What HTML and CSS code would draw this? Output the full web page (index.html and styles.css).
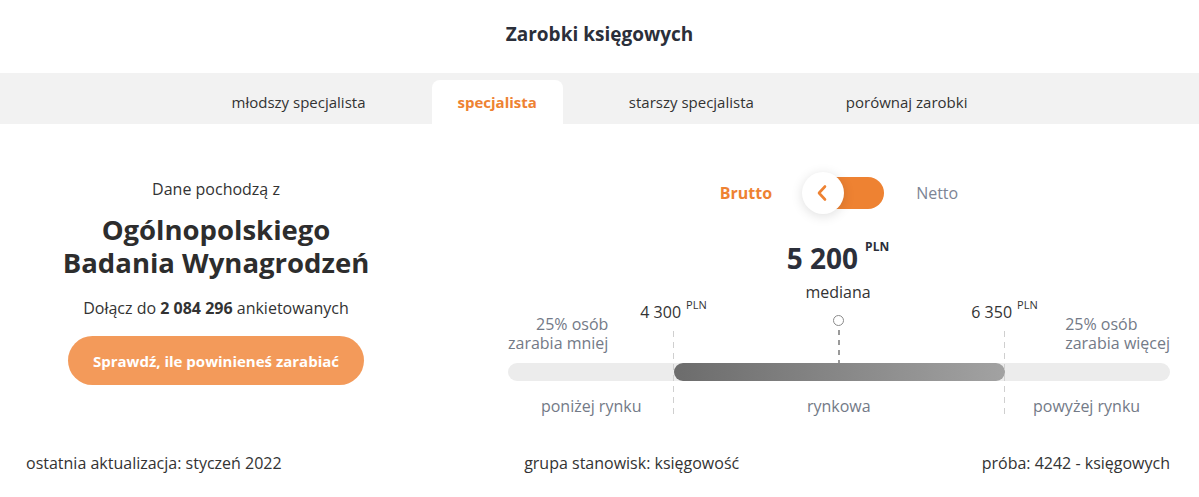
FILE: index.html
```html
<!DOCTYPE html>
<html lang="pl">
<head>
<meta charset="utf-8">
<title>Zarobki księgowych</title>
<link rel="stylesheet" href="styles.css">
</head>
<body>
<header class="header"><h1 class="title">Zarobki księgowych</h1></header>
<nav class="tabs">
  <a class="tab">młodszy specjalista</a>
  <a class="tab tab-active">specjalista</a>
  <a class="tab">starszy specjalista</a>
  <a class="tab">porównaj zarobki</a>
</nav>
<main class="main">
  <section class="info">
    <p class="info-lead">Dane pochodzą z</p>
    <h2 class="info-title">Ogólnopolskiego<br>Badania Wynagrodzeń</h2>
    <p class="info-join">Dołącz do <b>2 084 296</b> ankietowanych</p>
    <a class="cta">Sprawdź, ile powinieneś zarabiać</a>
  </section>
  <section class="salary">
    <div class="toggle">
      <span class="toggle-label toggle-on">Brutto</span>
      <span class="switch">
        <span class="switch-track"></span>
        <span class="switch-knob">
          <svg width="12" height="18" viewBox="0 0 12 18"><path d="M9 2.5 L3 9 L9 15.5" fill="none" stroke="#ee8232" stroke-width="2.6" stroke-linecap="round" stroke-linejoin="round"/></svg>
        </span>
      </span>
      <span class="toggle-label toggle-off">Netto</span>
    </div>
    <div class="median-value">5 200<span class="cur cur-big">PLN</span></div>
    <div class="median-label">mediana</div>
    <div class="scale">
      <div class="side side-left">25% osób<br>zarabia mniej</div>
      <div class="side side-right">25% osób<br>zarabia więcej</div>
      <div class="track"><div class="track-range"></div></div>
      <div class="zone">poniżej rynku</div>
      <div class="zone">rynkowa</div>
      <div class="zone">powyżej rynku</div>

      <div class="marker marker-q1"><span class="mval">4 300</span><span class="cur">PLN</span></div>
      <div class="marker marker-q3"><span class="mval">6 350</span><span class="cur">PLN</span></div>
      <div class="dash dash-q1"></div>
      <div class="dash dash-q3"></div>
      <div class="median-pin"><span class="pin-dot"></span><span class="pin-line"></span></div>
    </div>
  </section>
</main>
<footer class="footer">
  <span>ostatnia aktualizacja: styczeń 2022</span>
  <span>grupa stanowisk: księgowość</span>
  <span>próba: 4242 - księgowych</span>
</footer>
</body>
</html>
```

FILE: styles.css
```css
* { box-sizing: border-box; }
html, body { margin: 0; padding: 0; background: #fff; }
body {
  font-family: "Open Sans", "Noto Sans", sans-serif;
  color: #333;
  width: 1199px;
}
p, h1, h2 { margin: 0; }

.header {
  height: 73px;
  padding-bottom: 5px;
  display: flex;
  align-items: center;
  justify-content: center;
}
.title {
  font-size: 19px;
  font-weight: 700;
  color: #2b2f3a;
  line-height: 24px;
}

.tabs {
  height: 51px;
  background: #f2f2f2;
  display: flex;
  justify-content: center;
  align-items: flex-end;
  gap: 40px;
}
.tab {
  height: 44px;
  line-height: 44px;
  padding: 0 26px;
  font-size: 15px;
  color: #333;
  border-radius: 8px 8px 0 0;
  white-space: nowrap;
}
.tab-active {
  background: #fff;
  color: #ee8232;
  font-weight: 700;
}

.main {
  display: flex;
  justify-content: space-between;
  padding: 0 29px 0 26px;
}
.info {
  width: 380px;
  text-align: center;
  padding-top: 55px;
  display: flex;
  flex-direction: column;
  align-items: center;
}
.info-lead { font-size: 16px; line-height: 20px; color: #333; }
.info-title {
  margin-top: 14px;
  font-size: 27.5px;
  line-height: 33px;
  font-weight: 700;
  color: #2d2d2d;
}
.info-join { margin-top: 19px; font-size: 16px; line-height: 20px; color: #333; }
.info-join b { font-weight: 700; }
.cta {
  margin-top: 18px;
  width: 296px;
  height: 49px;
  border-radius: 25px;
  background: #f39a5a;
  color: #fff;
  font-weight: 700;
  font-size: 15px;
  display: flex;
  align-items: center;
  justify-content: center;
}

.salary {
  width: 662px;
  padding-top: 48px;
  display: flex;
  flex-direction: column;
  align-items: center;
}
.toggle {
  display: flex;
  align-items: center;
  height: 42px;
  gap: 30px;
}
.toggle-label { font-size: 16px; line-height: 20px; }
.toggle-on { color: #ee8232; font-weight: 700; }
.toggle-off { color: #7d8595; margin-left: 2px; }
.switch {
  position: relative;
  width: 82px;
  height: 42px;
}
.switch-track {
  position: absolute;
  left: 10px; right: 0; top: 5px; bottom: 5px;
  background: #ee8232;
  border-radius: 16px;
}
.switch-knob {
  position: absolute;
  left: 0; top: 0;
  width: 42px; height: 42px;
  border-radius: 50%;
  background: #fff;
  box-shadow: 0 2px 12px rgba(0,0,0,0.13);
  display: flex;
  align-items: center;
  justify-content: center;
  padding-right: 2px;
}

.median-value {
  margin-top: 27px;
  font-size: 28px;
  line-height: 34px;
  font-weight: 700;
  color: #2b2f3a;
  display: flex;
  align-items: flex-start;
  margin-left: -2px;
}
.cur {
  font-size: 11px;
  line-height: 11px;
  font-weight: 400;
  margin-left: 5px;
  position: relative;
  top: -3px;
}
.cur-big {
  font-size: 12px;
  line-height: 12px;
  font-weight: 700;
  margin-left: 7px;
  top: 0;
}
.median-label {
  margin-top: 7px;
  font-size: 16px;
  line-height: 20px;
  color: #333;
  margin-left: -2px;
}

.scale {
  position: relative;
  width: 662px;
  display: grid;
  grid-template-columns: 1fr 2fr 1fr;
  grid-template-rows: 61px 18px auto;
}
.side {
  align-self: end;
  padding-bottom: 10px;
  font-size: 16px;
  line-height: 19px;
  color: #737a87;
  white-space: nowrap;
}
.side-left { grid-column: 1; grid-row: 1; text-align: right; padding-right: 66px; }
.side-right { grid-column: 3; grid-row: 1; text-align: left; padding-left: 62px; }
.track {
  grid-column: 1 / 4;
  grid-row: 2;
  background: #ececec;
  border-radius: 9px;
  display: grid;
  grid-template-columns: 1fr 2fr 1fr;
}
.track-range {
  grid-column: 2;
  border-radius: 9px;
  background: linear-gradient(90deg, #6c6c6c 0%, #a2a2a2 100%);
}
.zone {
  grid-row: 3;
  margin-top: 15px;
  text-align: center;
  font-size: 16px;
  line-height: 20px;
  color: #737a87;
  white-space: nowrap;
}

.marker {
  position: absolute;
  top: 0;
  transform: translateX(-50%);
  display: flex;
  align-items: flex-start;
  color: #333;
  white-space: nowrap;
}
.mval { font-size: 16px; line-height: 20px; }
.marker-q1 { left: 25%; }
.marker-q3 { left: 75%; }
.dash {
  position: absolute;
  top: 29px;
  width: 1px;
  height: 86px;
  background: repeating-linear-gradient(to bottom, #cfcfcf 0 6px, transparent 6px 11px);
}
.dash-q1 { left: calc(25% - 0.5px); }
.dash-q3 { left: calc(75% - 0.5px); }
.median-pin {
  position: absolute;
  left: calc(50% - 6px);
  top: 13px;
  width: 11px;
  display: flex;
  flex-direction: column;
  align-items: center;
}
.pin-dot {
  width: 11px;
  height: 11px;
  border-radius: 50%;
  border: 1px solid #8a8a8a;
  background: #fff;
}
.pin-line {
  margin-top: 4px;
  width: 2px;
  height: 33px;
  background: repeating-linear-gradient(to bottom, #9a9a9a 0 5px, transparent 5px 10px);
}

.footer {
  margin-top: 37px;
  padding: 0 29px 0 26px;
  display: flex;
  justify-content: space-between;
  font-size: 16px;
  line-height: 20px;
  color: #333;
}
```
